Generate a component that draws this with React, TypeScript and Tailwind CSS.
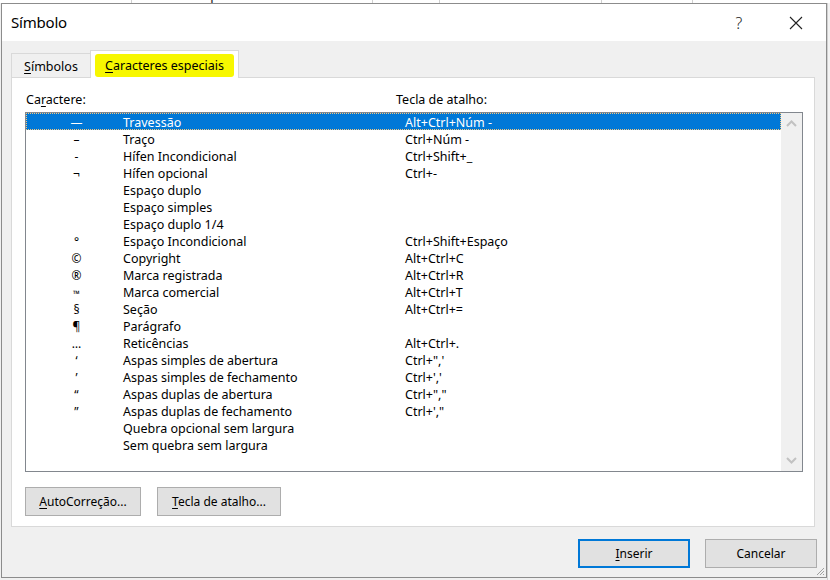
import React from "react";

const rows: [string, string, string][] = [
  ["—", "Travessão", "Alt+Ctrl+Núm -"],
  ["–", "Traço", "Ctrl+Núm -"],
  ["-", "Hífen Incondicional", "Ctrl+Shift+_"],
  ["¬", "Hífen opcional", "Ctrl+-"],
  ["", "Espaço duplo", ""],
  ["", "Espaço simples", ""],
  ["", "Espaço duplo 1/4", ""],
  ["°", "Espaço Incondicional", "Ctrl+Shift+Espaço"],
  ["©", "Copyright", "Alt+Ctrl+C"],
  ["®", "Marca registrada", "Alt+Ctrl+R"],
  ["™", "Marca comercial", "Alt+Ctrl+T"],
  ["§", "Seção", "Alt+Ctrl+="],
  ["¶", "Parágrafo", ""],
  ["…", "Reticências", "Alt+Ctrl+."],
  ["‘", "Aspas simples de abertura", "Ctrl+\",'"],
  ["’", "Aspas simples de fechamento", "Ctrl+','"],
  ["“", "Aspas duplas de abertura", "Ctrl+\",\""],
  ["”", "Aspas duplas de fechamento", "Ctrl+',\""],
  ["", "Quebra opcional sem largura", ""],
  ["", "Sem quebra sem largura", ""],
];

function Btn({ children, w, primary }: { children: React.ReactNode; w: string; primary?: boolean }) {
  return (
    <div
      className={`${w} h-[29px] flex items-center justify-center bg-[#e1e1e1] text-[12px] text-black ${
        primary ? "border-2 border-[#0078d7]" : "border border-[#adadad]"
      }`}
    >
      {children}
    </div>
  );
}

export default function App() {
  return (
    <div className="w-[830px] h-[580px] overflow-hidden bg-[#f0f0f0] text-black font-['Noto_Sans',sans-serif] flex flex-col">
      {/* background app strip */}
      <div className="h-[3px] w-full bg-white overflow-hidden flex text-[15px] text-[#333] leading-[18px] shrink-0">
        <div className="w-[132px] border-r border-[#d0d0d0]" />
        <div className="w-[241px] border-r border-[#d0d0d0] -mt-[15px] pl-[10px] flex items-start gap-[4px]">
          <span className="inline-block w-[12px] h-[12px] mt-[3px] bg-[#2b79d0] rounded-sm" />
          <span>Meus Aplicativos</span>
        </div>
        <div className="w-[67px] border-r border-[#d0d0d0]" />
        <div className="w-[162px] border-r border-[#d0d0d0] -mt-[15px] pl-[10px] flex items-start gap-[3px]">
          <span className="inline-block w-[10px] h-[12px] mt-[3px] border border-[#777]" />
          <span>Referência Cruzada</span>
        </div>
        <div className="w-[91px] border-r border-[#d0d0d0]" />
      </div>

      <div className="flex flex-1">
        {/* dialog */}
        <div className="ml-[1px] w-[826px] h-[575px] border border-[#8c8c8c] bg-[#f0f0f0] flex flex-col relative">
          {/* title bar */}
          <div className="h-[37px] bg-white flex items-center shrink-0">
            <div className="pl-[9px] text-[15px] leading-none font-['Noto_Sans',sans-serif] tracking-[-0.2px]">Símbolo</div>
            <div className="flex-1" />
            <div className="w-[20px] text-center text-[16px] mr-[40px] font-light text-[#222]">?</div>
            <svg width="14" height="14" viewBox="0 0 14 14" className="mr-[23px]">
              <path d="M1 1 L13 13 M13 1 L1 13" stroke="#222" strokeWidth="1.1" />
            </svg>
          </div>

          {/* body */}
          <div className="flex-1 flex flex-col pt-[9px]">
            {/* tabs */}
            <div className="flex items-end ml-[9px] h-[28px] relative z-10">
              <div className="w-[79px] h-[25px] border-t border-l border-[#d9d9d9] flex items-center justify-center text-[12.5px] pt-[3px]">
                <span>
                  <span className="underline underline-offset-2">S</span>ímbolos
                </span>
              </div>
              <div className="w-[149px] h-[28px] bg-white border border-b-0 border-[#d9d9d9] flex items-center justify-center pt-[2px]">
                <span className="bg-[#f7f700] px-[10px] pt-[3px] pb-[1px] rounded-[3px] text-[12.5px]">
                  <span className="underline underline-offset-2">C</span>aracteres especiais
                </span>
              </div>
            </div>

            {/* panel */}
            <div className="ml-[9px] w-[804px] h-[450px] -mt-[1px] bg-white border border-[#d9d9d9] flex flex-col">
              <div className="flex text-[12.5px] mt-[14px] h-[16px] items-center">
                <div className="ml-[14px] w-[370px]">
                  Ca<span className="underline underline-offset-2">r</span>actere:
                </div>
                <div>Tecla de atalho:</div>
              </div>
              <div className="ml-[13px] mt-[4px] w-[778px] h-[360px] border border-[#82878e] flex">
                <div className="flex-1 flex flex-col">
                  {rows.map((r, i) => {
                    const sel = i === 0;
                    return (
                      <div
                        key={i}
                        className={`h-[17px] pt-[3px] flex items-center text-[12.5px] leading-none ${
                          sel ? "bg-[#0078d7] text-white outline outline-1 outline-dotted outline-offset-[-1px] outline-[#f5c77e]" : ""
                        }`}
                      >
                        <div className="w-[97px] flex justify-center pl-[4px]">
                          <span className={i === 10 ? "text-[9px]" : "text-[12px]"}>{r[0]}</span>
                        </div>
                        <div className="w-[282px]">{r[1]}</div>
                        <div>{r[2]}</div>
                      </div>
                    );
                  })}
                </div>
                <div className="w-[21px] bg-[#f0f0f0] flex flex-col items-center justify-between py-[7px]">
                  <svg width="11" height="7" viewBox="0 0 11 7">
                    <path d="M1 6 L5.5 1.5 L10 6" stroke="#c2c2c2" strokeWidth="2" fill="none" />
                  </svg>
                  <svg width="11" height="7" viewBox="0 0 11 7">
                    <path d="M1 1 L5.5 5.5 L10 1" stroke="#c2c2c2" strokeWidth="2" fill="none" />
                  </svg>
                </div>
              </div>
              <div className="flex ml-[13px] mt-[15px] gap-[16px]">
                <Btn w="w-[116px]">
                  <span>
                    <span className="underline underline-offset-2">A</span>utoCorreção...
                  </span>
                </Btn>
                <Btn w="w-[124px]">
                  <span>
                    <span className="underline underline-offset-2">T</span>ecla de atalho...
                  </span>
                </Btn>
              </div>
            </div>

            {/* bottom buttons */}
            <div className="flex justify-end gap-[15px] mt-[12px] mr-[9px]">
              <Btn w="w-[112px]" primary>
                <span>
                  <span className="underline underline-offset-2">I</span>nserir
                </span>
              </Btn>
              <Btn w="w-[112px]">Cancelar</Btn>
            </div>
          </div>

          {/* resize grip */}
          <svg width="10" height="10" viewBox="0 0 10 10" className="absolute right-[1px] bottom-[1px]">
            <path d="M9 2 L2 9 M9 5 L5 9 M9 8 L8 9" stroke="#a0a0a0" strokeWidth="1" />
          </svg>
        </div>
        <div className="flex-1 border-l border-[#d0d0d0] bg-[#f3f3f3]" />
      </div>
    </div>
  );
}
